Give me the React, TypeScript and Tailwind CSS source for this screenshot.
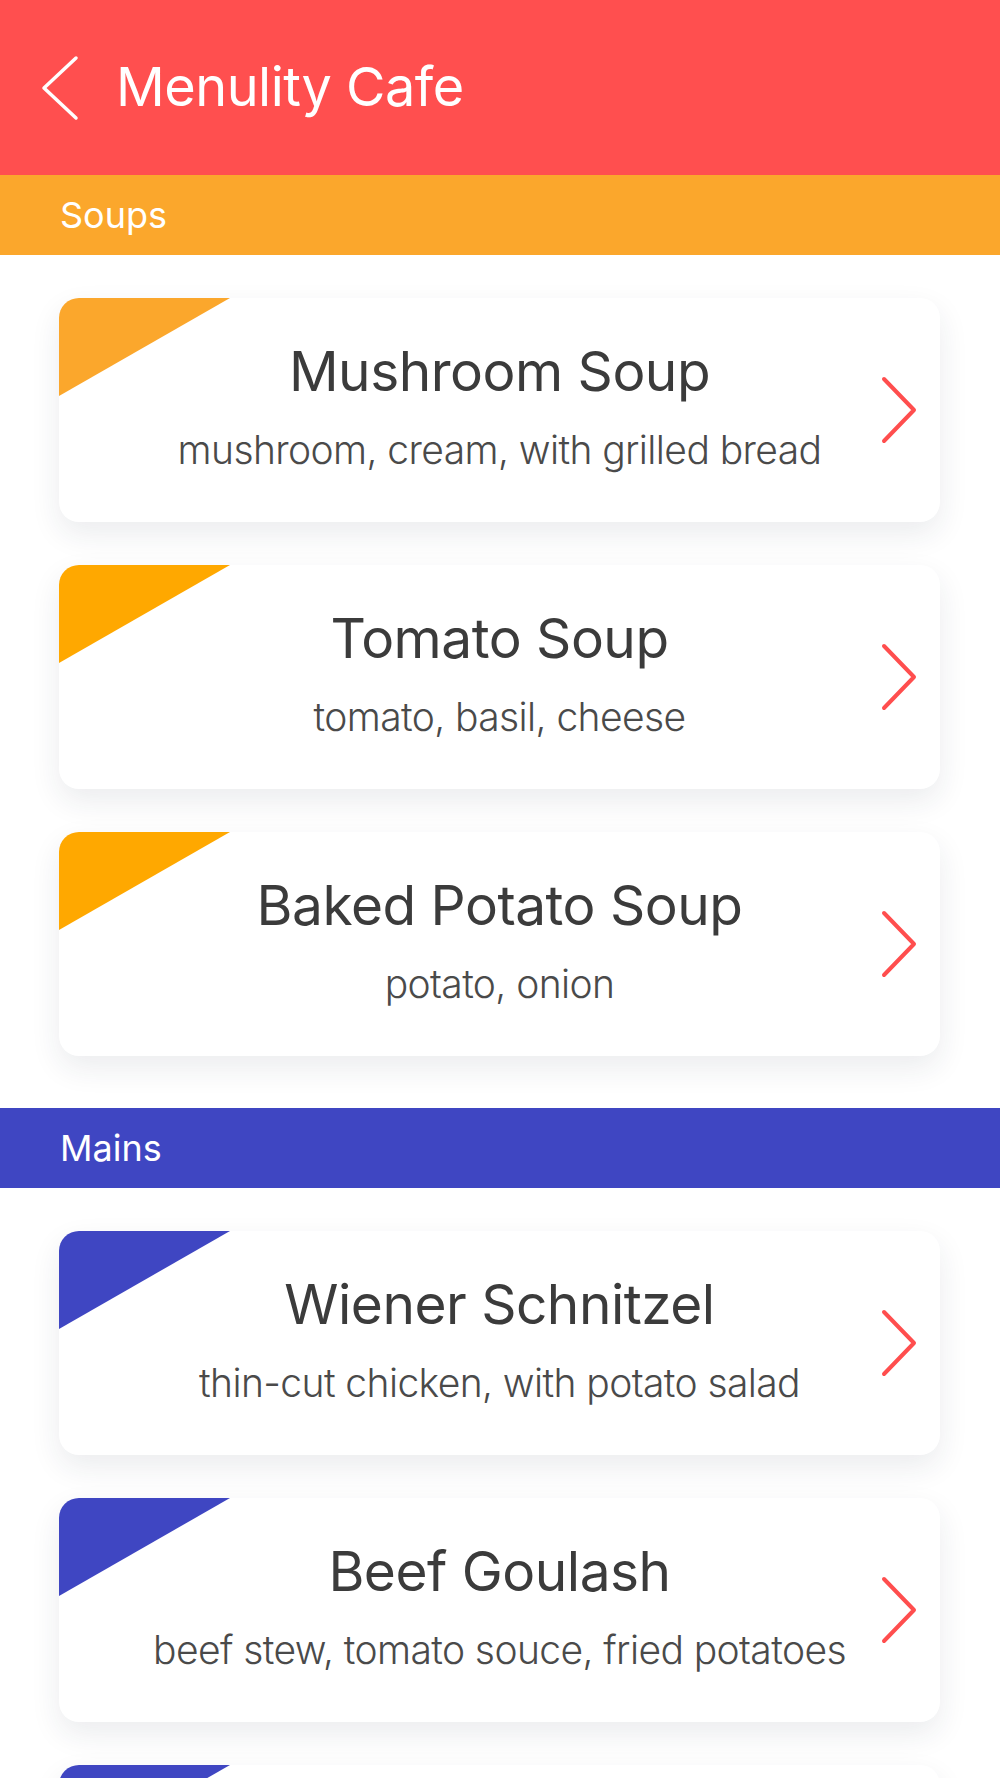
import React from "react";

type Item = { title: string; desc: string; tri: string };

const soups: Item[] = [
  { title: "Mushroom Soup", desc: "mushroom, cream, with grilled bread", tri: "#FBA72C" },
  { title: "Tomato Soup", desc: "tomato, basil, cheese", tri: "#FFA800" },
  { title: "Baked Potato Soup", desc: "potato, onion", tri: "#FFA800" },
];

const mains: Item[] = [
  { title: "Wiener Schnitzel", desc: "thin-cut chicken, with potato salad", tri: "#3F46C2" },
  { title: "Beef Goulash", desc: "beef stew, tomato souce, fried potatoes", tri: "#3F46C2" },
  { title: "", desc: "", tri: "#3F46C2" },
];

function Card({ item }: { item: Item }) {
  return (
    <div className="relative h-[224px] shrink-0 overflow-hidden rounded-[20px] bg-white shadow-[0_12px_30px_rgba(30,40,70,0.09)]">
      <svg className="absolute left-0 top-0" width="171" height="98" viewBox="0 0 171 98">
        <polygon points="0,0 171,0 0,98" fill={item.tri} />
      </svg>
      <div className="flex h-full flex-col items-center pt-[37px]">
        <div className="h-[72px] text-[55px] leading-[72px] text-[#3b3b3b] tracking-[-0.5px]">{item.title}</div>
        <div className="mt-[19px] h-[48px] text-[39px] font-light leading-[48px] text-[#4a4a4a] tracking-[-0.6px]">{item.desc}</div>
      </div>
      <svg
        className="absolute right-[22px] top-1/2 -translate-y-1/2"
        width="37"
        height="68"
        viewBox="0 0 37 68"
        fill="none"
      >
        <polyline points="3,3 33,34 3,65" stroke="#FF4E4E" strokeWidth="4" strokeLinecap="round" strokeLinejoin="round" />
      </svg>
    </div>
  );
}

function Section({ name, color, items }: { name: string; color: string; items: Item[] }) {
  return (
    <div>
      <div className="flex h-[80px] items-center pl-[60px] text-[36px] text-white" style={{ backgroundColor: color }}>
        {name}
      </div>
      <div className="flex flex-col gap-[43px] pb-[52px] pl-[59px] pr-[60px] pt-[43px]">
        {items.map((it, i) => (
          <Card key={i} item={it} />
        ))}
      </div>
    </div>
  );
}

export default function App() {
  return (
    <div className="h-[1778px] w-[1000px] overflow-hidden bg-white" style={{ fontFamily: "Inter, 'Noto Sans', sans-serif" }}>
      <div className="flex h-[175px] items-center bg-[#FF4F4F]">
        <svg className="ml-[41px]" width="38" height="66" viewBox="0 0 38 66" fill="none">
          <polyline points="35,3 3,33 35,63" stroke="white" strokeWidth="3.5" strokeLinecap="round" strokeLinejoin="round" />
        </svg>
        <div className="ml-[37px] pb-[2px] text-[54px] text-white tracking-[-0.5px]">Menulity Cafe</div>
      </div>
      <Section name="Soups" color="#FBA72C" items={soups} />
      <Section name="Mains" color="#3F46C2" items={mains} />
    </div>
  );
}
